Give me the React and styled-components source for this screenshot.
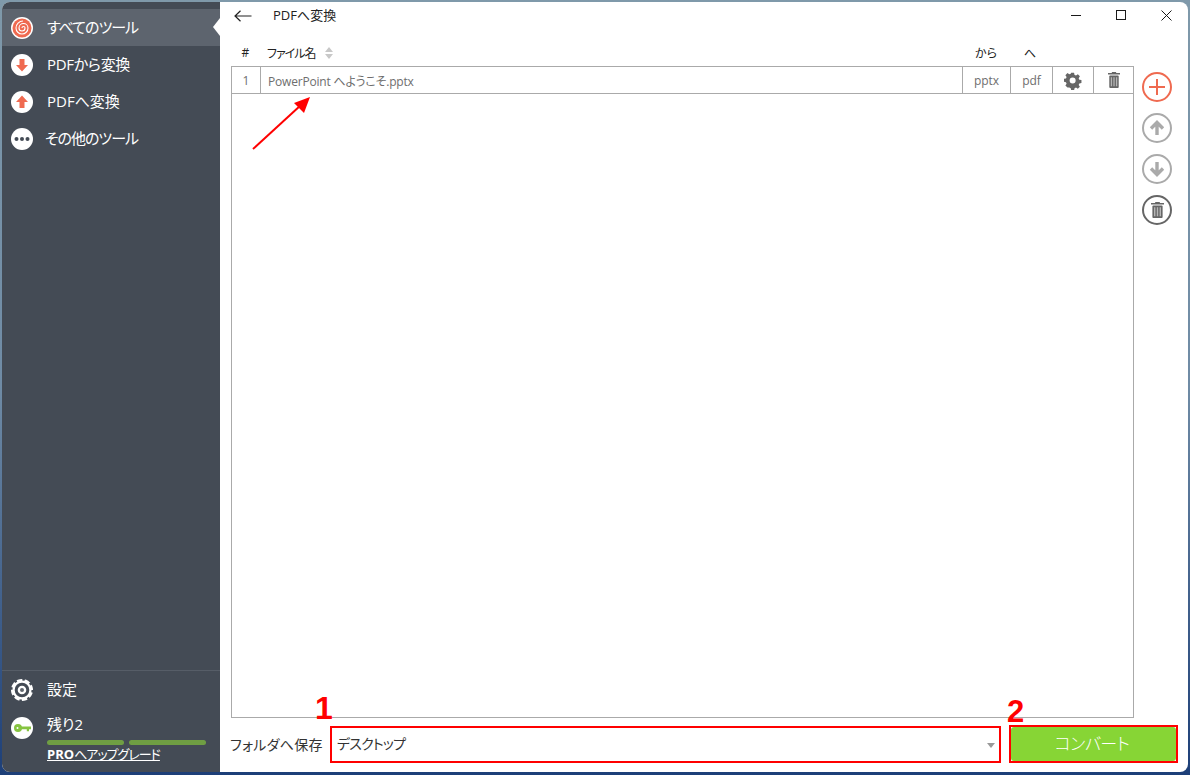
import React from 'react';
import styled, { createGlobalStyle } from 'styled-components';

const FONT = '"Open Sans", "Noto Sans CJK JP", sans-serif';

const GlobalStyle = createGlobalStyle`
  html, body {
    margin: 0;
    height: 100%;
    overflow: hidden;
  }
  body {
    font-family: ${FONT};
    font-feature-settings: "palt";
    background: linear-gradient(180deg, #7f99aa 0%, #6f8ba5 50%, #1d3f78 100%);
  }
`;

const Desktop = styled.div`
  box-sizing: border-box;
  width: 1190px;
  height: 775px;
  padding: 2px 2px 3px 2px;
`;

const Window = styled.div`
  position: relative;
  display: flex;
  height: 100%;
  border-radius: 8px;
  overflow: hidden;
  background: #fff;
`;

const Sidebar = styled.nav`
  flex: 0 0 218px;
  display: flex;
  flex-direction: column;
  background: #444b55;
  padding-top: 7px;
  color: #fff;
`;

const NavItem = styled.div`
  position: relative;
  display: flex;
  align-items: center;
  height: 37px;
  padding-left: 9px;
  gap: 14px;
  font-size: 15px;
  background: ${p => (p.$active ? '#5d646e' : 'transparent')};
  ${p => p.$active && `
    &::after {
      content: '';
      position: absolute;
      right: 0;
      top: 9px;
      border-top: 9px solid transparent;
      border-bottom: 9px solid transparent;
      border-right: 7px solid #fff;
    }
  `}
`;

const NavLabel = styled.span`
  margin-top: -2px;
  margin-left: ${p => p.$shift || 0}px;
  letter-spacing: ${p => p.$tracking || 0}px;
`;

const Spacer = styled.div`
  flex: 1;
`;

const SideFooter = styled.div`
  border-top: 1px solid #565d67;
  height: 102px;
  box-sizing: border-box;
`;

const Remaining = styled.div`
  display: flex;
  gap: 14px;
  padding: 6px 0 0 9px;
  font-size: 15px;
`;

const RemainingIcon = styled.div`
  padding-top: 3px;
`;

const RemainingBody = styled.div`
  display: flex;
  flex-direction: column;
  line-height: 20px;
`;

const Meter = styled.div`
  display: flex;
  gap: 5px;
  margin: 6px 0 0;
  width: 159px;
`;

const MeterPart = styled.div`
  flex: 1;
  height: 5px;
  border-radius: 3px;
  background: #6f9e43;
`;

const UpgradeLink = styled.a`
  font-size: 13px;
  line-height: 18px;
  letter-spacing: -1px;
  color: #fff;
  text-decoration: underline;
  font-weight: 400;
`;

const UpgradePro = styled.b`
  font-weight: 700;
  letter-spacing: 0;
`;

const Main = styled.main`
  flex: 1;
  min-width: 0;
  display: flex;
  flex-direction: column;
`;

const TitleBar = styled.header`
  display: flex;
  align-items: center;
  height: 27px;
  padding-left: 14px;
  color: #222;
`;

const BackButton = styled.div`
  display: flex;
  width: 18px;
  margin-right: 21px;
`;

const Title = styled.div`
  flex: 1;
  font-size: 13px;
  margin-top: -2px;
`;

const WinControls = styled.div`
  display: flex;
  align-items: center;
  gap: 28px;
  padding-right: 13px;
`;

const WinIcon = styled.svg`
  display: block;
  width: 17px;
  height: 17px;
  fill: none;
  stroke: #1a1a1a;
`;

const ColumnHead = styled.div`
  display: flex;
  align-items: center;
  height: 37px;
  padding: 10px 0 0 11px;
  box-sizing: border-box;
  font-size: 12px;
  color: #222;
`;

const HeadCell = styled.div`
  flex: 0 0 ${p => p.$w}px;
  display: flex;
  align-items: center;
  justify-content: ${p => (p.$left ? 'flex-start' : 'center')};
  ${p => p.$left && 'padding-left: 7px; box-sizing: border-box;'}
`;

const HeadName = styled.span`
  letter-spacing: -1px;
`;

const SortIcon = styled.svg`
  width: 10px;
  height: 12px;
  margin-left: 8px;
  fill: #c8c8c8;
`;

const Content = styled.div`
  flex: 1;
  min-height: 0;
  display: flex;
  padding-left: 11px;
`;

const TableBox = styled.div`
  box-sizing: border-box;
  flex: 0 0 903px;
  height: 652px;
  border: 1px solid #aaa;
`;

const Row = styled.div`
  display: flex;
  height: 27px;
  box-sizing: border-box;
  border-bottom: 1px solid #aaa;
  font-size: 12px;
  color: #6e6e6e;
`;

const Cell = styled.div`
  flex: 0 0 ${p => p.$w}px;
  box-sizing: border-box;
  display: flex;
  align-items: center;
  justify-content: ${p => (p.$left ? 'flex-start' : 'center')};
  ${p => p.$left && 'padding-left: 7px;'}
  ${p => p.$grow && 'flex: 1;'}
  ${p => !p.$last && 'border-right: 1px solid #aaa;'}
`;

const CellText = styled.span`
  margin-top: 1px;
  letter-spacing: ${p => p.$tracking || 0}px;
`;

const SideActions = styled.div`
  display: flex;
  flex-direction: column;
  align-items: center;
  gap: 11px;
  width: 46px;
  padding: 6px 0 0 0;
`;

const RoundButton = styled.div`
  box-sizing: border-box;
  width: 30px;
  height: 30px;
  border-radius: 50%;
  border: 2px solid ${p => p.$color};
  display: flex;
  align-items: center;
  justify-content: center;
`;

const BottomBar = styled.div`
  display: flex;
  align-items: center;
  height: 47px;
  padding: 0 10px 9px 10px;
  box-sizing: border-box;
  font-size: 14px;
  color: #333;
`;

const SaveLabel = styled.div`
  flex: 0 0 100px;
  white-space: nowrap;
  margin-top: -1px;
  letter-spacing: 0.3px;
`;

const Select = styled.div`
  position: relative;
  box-sizing: border-box;
  flex: 0 0 671px;
  height: 37px;
  margin-top: 1px;
  display: flex;
  align-items: center;
  padding: 0 0 3px 5px;
  border: 2px solid #f00;
  font-size: 14px;
  letter-spacing: -0.8px;
  color: #333;
`;

const Caret = styled.div`
  position: absolute;
  right: 4px;
  top: 15px;
  border-left: 4px solid transparent;
  border-right: 4px solid transparent;
  border-top: 5px solid #999;
`;

const ConvertWrap = styled.div`
  position: relative;
  box-sizing: border-box;
  flex: 0 0 169px;
  height: 38px;
  margin-left: 8px;
  border: 2px solid #f00;
`;

const ConvertButton = styled.div`
  height: 100%;
  display: flex;
  align-items: center;
  justify-content: center;
  padding: 0 3px 3px 0;
  box-sizing: border-box;
  background: #87d535;
  border-radius: 3px;
  color: #fff;
  font-size: 17px;
  letter-spacing: -0.5px;
  font-weight: 300;
`;

const StepNumber = styled.div`
  position: absolute;
  left: ${p => p.$x}px;
  top: ${p => p.$y}px;
  font-family: "Liberation Sans", sans-serif;
  font-size: ${p => p.$size}px;
  font-weight: 700;
  line-height: 34px;
  letter-spacing: 0;
  color: #f00;
`;

const ArrowMark = styled.svg`
  position: absolute;
  left: 249px;
  top: 93px;
  width: 62px;
  height: 58px;
`;

const Disc = ({ children }) => (
  <svg width="22" height="22" viewBox="0 0 22 22" style={{ flex: 'none', display: 'block' }}>
    <circle cx="11" cy="11" r="11" fill="#fff" />
    {children}
  </svg>
);

const TrashGlyph = ({ color, w, h }) => (
  <svg width={w} height={h} viewBox="0 0 14 18" preserveAspectRatio="none" style={{ display: 'block' }}>
    <path d="M4.500 0h5v1H14v1.800H0V1h4.500z" fill={color} />
    <rect x="1.500" y="4" width="11" height="14" rx="1" fill={color} />
    <path d="M4 6v10M7 6v10M10 6v10" stroke="#b5b5b5" strokeWidth="1.500" />
  </svg>
);

const GEAR = 'M9.300 1h3.400l.5 2.500 1.700.7 2.100-1.400 2.400 2.400-1.400 2.100.7 1.700 2.500.5v3.400l-2.500.5-.7 1.700 1.400 2.100-2.400 2.400-2.100-1.400-1.700.7-.5 2.500H9.300l-.5-2.500-1.700-.7L5 18.200 2.600 15.800 4 13.700l-.7-1.700L.8 11.500V8.100l2.500-.5.7-1.700L2.600 3.800 5 1.400l2.100 1.400 1.700-.7zM11 6.500a3.500 3.500 0 1 0 0 7 3.500 3.500 0 0 0 0-7z';

const MoveArrow = ({ color, flip }) => (
  <svg width="18" height="18" viewBox="0 0 18 18" style={{ display: 'block', transform: flip ? 'rotate(180deg)' : 'none' }}>
    <path d="M9 16V4M3 9.500L9 3.500l6 6" fill="none" stroke={color} strokeWidth="3.400" />
  </svg>
);

export default function App() {
  return (
    <Desktop>
      <GlobalStyle />
      <Window>
        <Sidebar>
          <NavItem $active>
            <Disc>
              <circle cx="11" cy="11" r="9.500" fill="#ef6a50" />
              <path d="M11 11a1.500 1.500 0 0 1 3 0a3 3 0 0 1-6 0a4.500 4.500 0 0 1 9 0a6 6 0 0 1-12 0a7 7 0 0 1 7-7" fill="none" stroke="#fff" strokeWidth="1.100" />
            </Disc>
            <NavLabel $tracking={-1}>すべてのツール</NavLabel>
          </NavItem>
          <NavItem>
            <Disc><path d="M8.500 5h5v6H17l-6 6.500L5 11h3.500z" fill="#ef6a50" /></Disc>
            <NavLabel $tracking={-0.3}>PDFから変換</NavLabel>
          </NavItem>
          <NavItem>
            <Disc><path d="M8.500 17h5v-6H17L11 4.500 5 11h3.500z" fill="#ef6a50" /></Disc>
            <NavLabel>PDFへ変換</NavLabel>
          </NavItem>
          <NavItem>
            <Disc>
              <circle cx="5.500" cy="11" r="2" fill="#444b55" />
              <circle cx="11" cy="11" r="2" fill="#444b55" />
              <circle cx="16.500" cy="11" r="2" fill="#444b55" />
            </Disc>
            <NavLabel $tracking={-1} $shift={-2}>その他のツール</NavLabel>
          </NavItem>
          <Spacer />
          <SideFooter>
            <NavItem>
              <svg width="22" height="22" viewBox="0 0 22 22" style={{ flex: 'none', display: 'block' }}>
                <circle cx="11" cy="11" r="11" fill="#fff" />
                <circle cx="11" cy="11" r="10.500" fill="none" stroke="#444b55" strokeWidth="2" strokeDasharray="2.500 5.750" />
                <circle cx="11" cy="11" r="5.800" fill="none" stroke="#444b55" strokeWidth="3" />
                <circle cx="11" cy="11" r="2" fill="#444b55" opacity="0.85" />
              </svg>
              <NavLabel>設定</NavLabel>
            </NavItem>
            <Remaining>
              <RemainingIcon>
                <Disc>
                  <circle cx="7" cy="11" r="4" fill="#86c440" />
                  <circle cx="6.500" cy="11" r="1" fill="#fff" />
                  <path d="M10 9.500h10v2.700h-2v2h-2.200v-2H10z" fill="#86c440" />
                </Disc>
              </RemainingIcon>
              <RemainingBody>
                残り2
                <Meter>
                  <MeterPart />
                  <MeterPart />
                </Meter>
                <UpgradeLink><UpgradePro>PRO</UpgradePro>へアップグレード</UpgradeLink>
              </RemainingBody>
            </Remaining>
          </SideFooter>
        </Sidebar>
        <Main>
          <TitleBar>
            <BackButton>
              <svg width="18" height="12" viewBox="0 0 18 12" style={{ display: 'block' }}>
                <path d="M17.500 6H1M6.500.7L1 6l5.500 5.300" fill="none" stroke="#222" strokeWidth="1.200" />
              </svg>
            </BackButton>
            <Title>PDFへ変換</Title>
            <WinControls>
              <WinIcon viewBox="0 0 17 17"><path d="M3 8.500h10" strokeWidth="1" /></WinIcon>
              <WinIcon viewBox="0 0 17 17"><rect x="3.500" y="3.500" width="9" height="9" strokeWidth="1" /></WinIcon>
              <WinIcon viewBox="0 0 17 17"><path d="M3.500 3.500l10 10M13.500 3.500l-10 10" strokeWidth="1" /></WinIcon>
            </WinControls>
          </TitleBar>
          <ColumnHead>
            <HeadCell $w={29}>#</HeadCell>
            <HeadCell $w={702} $left>
              <HeadName>ファイル名</HeadName>
              <SortIcon viewBox="0 0 10 12"><path d="M5 0l4 5H1zM5 12L1 7h8z" /></SortIcon>
            </HeadCell>
            <HeadCell $w={48}>から</HeadCell>
            <HeadCell $w={40}>へ</HeadCell>
          </ColumnHead>
          <Content>
            <TableBox>
              <Row>
                <Cell $w={29}><CellText>1</CellText></Cell>
                <Cell $grow $left><CellText $tracking={-0.2}>PowerPoint へようこそ.pptx</CellText></Cell>
                <Cell $w={48}><CellText>pptx</CellText></Cell>
                <Cell $w={42}><CellText>pdf</CellText></Cell>
                <Cell $w={41}>
                  <svg width="19" height="19" viewBox="1 0 22 20" style={{ display: 'block' }}>
                    <path fillRule="evenodd" d={GEAR} fill="#666" />
                  </svg>
                </Cell>
                <Cell $w={39} $last><TrashGlyph color="#666" w={12} h={16} /></Cell>
              </Row>
            </TableBox>
            <SideActions>
              <RoundButton $color="#ef6a50">
                <svg width="18" height="18" viewBox="0 0 18 18" style={{ display: 'block' }}>
                  <path d="M9 1v16M1 9h16" stroke="#ef6a50" strokeWidth="2" />
                </svg>
              </RoundButton>
              <RoundButton $color="#aaa"><MoveArrow color="#aaa" /></RoundButton>
              <RoundButton $color="#aaa"><MoveArrow color="#aaa" flip /></RoundButton>
              <RoundButton $color="#666"><TrashGlyph color="#666" w={13} h={16} /></RoundButton>
            </SideActions>
          </Content>
          <BottomBar>
            <SaveLabel>フォルダへ保存</SaveLabel>
            <Select>
              <StepNumber $x={-17} $y={-37} $size={32}>1</StepNumber>
              デスクトップ
              <Caret />
            </Select>
            <ConvertWrap>
              <StepNumber $x={-4} $y={-32} $size={31}>2</StepNumber>
              <ConvertButton>コンバート</ConvertButton>
            </ConvertWrap>
          </BottomBar>
        </Main>
        <ArrowMark viewBox="0 0 62 58">
          <path d="M2 54L50 10" stroke="#f00" strokeWidth="2" fill="none" />
          <path d="M59 2L53 18 43 8z" fill="#f00" />
        </ArrowMark>
      </Window>
    </Desktop>
  );
}
